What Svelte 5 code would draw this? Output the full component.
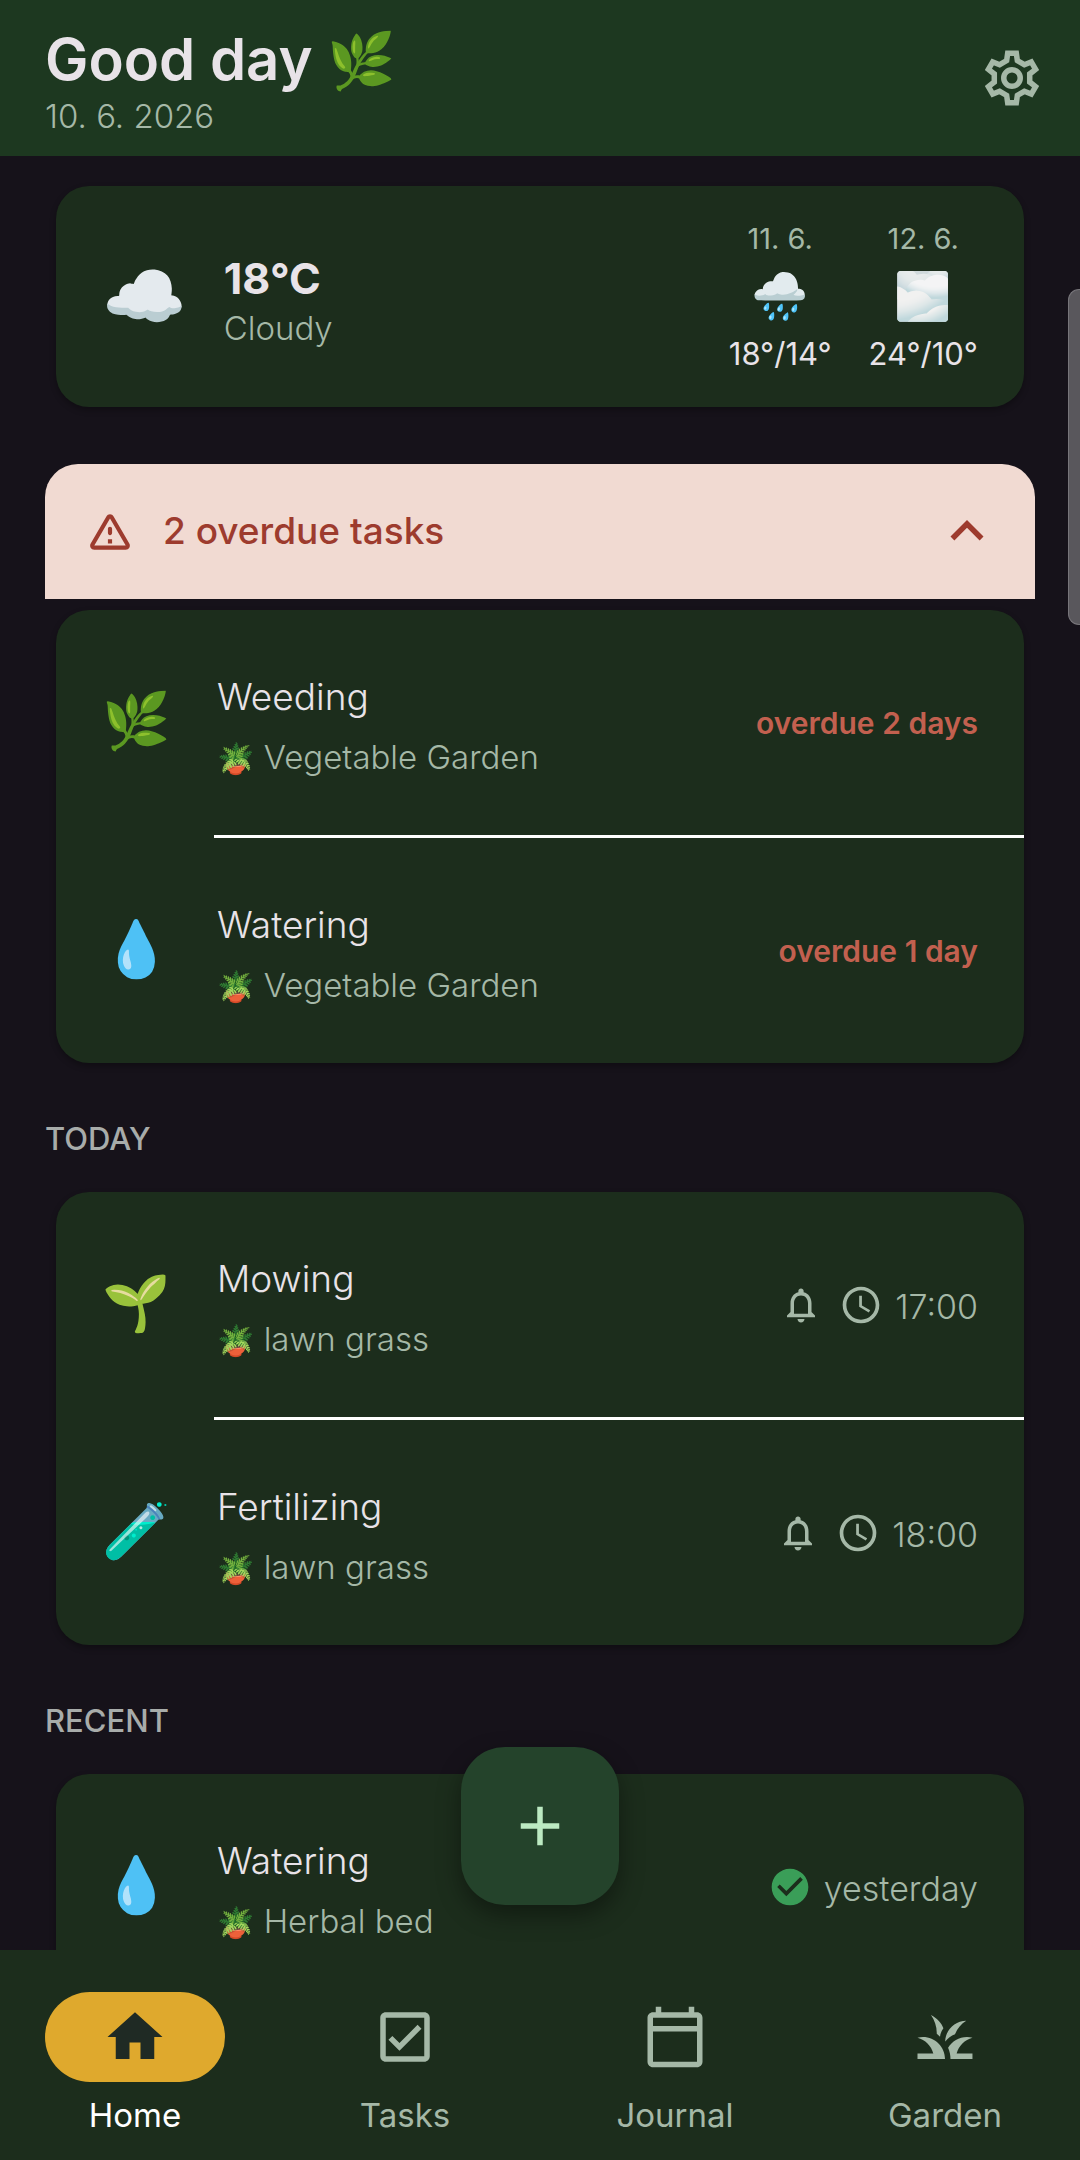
<script>
    const forecast = [
        { date: '11. 6.', icon: '🌧️', temps: '18°/14°' },
        { date: '12. 6.', icon: '🌫️', temps: '24°/10°' }
    ];

    const overdue = [
        { icon: '🌿', name: 'Weeding', place: 'Vegetable Garden', late: 'overdue 2 days' },
        { icon: '💧', name: 'Watering', place: 'Vegetable Garden', late: 'overdue 1 day' }
    ];

    const today = [
        { icon: '🌱', name: 'Mowing', place: 'lawn grass', time: '17:00' },
        { icon: '🧪', name: 'Fertilizing', place: 'lawn grass', time: '18:00' }
    ];

    const recent = [
        { icon: '💧', name: 'Watering', place: 'Herbal bed', done: 'yesterday' }
    ];

    const tabs = [
        {
            id: 'home',
            label: 'Home',
            path: 'M10 20v-6h4v6h5v-8h3L12 3 2 12h3v8z'
        },
        {
            id: 'tasks',
            label: 'Tasks',
            path: 'M19 3H5c-1.1 0-2 .9-2 2v14c0 1.1.9 2 2 2h14c1.1 0 2-.9 2-2V5c0-1.1-.9-2-2-2zm0 16H5V5h14v14zM17.99 9l-1.41-1.42-6.59 6.59-2.58-2.57-1.42 1.41 4 3.99z'
        },
        {
            id: 'journal',
            label: 'Journal',
            path: 'M20 3h-1V1h-2v2H7V1H5v2H4c-1.1 0-2 .9-2 2v16c0 1.1.9 2 2 2h16c1.1 0 2-.9 2-2V5c0-1.1-.9-2-2-2zm0 18H4V10h16v11zm0-13H4V5h16v3z'
        },
        {
            id: 'garden',
            label: 'Garden',
            path: 'M12 20H2v-2h5.75C7.02 15.19 4.81 12.99 2 12.26 2.64 12.1 3.31 12 4 12c4.42 0 8 3.58 8 8zm10-7.74c-.64-.16-1.31-.26-2-.26-2.93 0-5.48 1.58-6.88 3.93.29.66.53 1.35.67 2.07.13.65.2 1.32.2 2h8v-2h-5.75c.74-2.81 2.95-5.01 5.76-5.74zm-6.36-1.24c.78-2.09 2.23-3.84 4.09-4.97-4.11.04-7.46 3.33-7.66 7.41.01.07.02.14.03.21.89-1.21 2.11-2.12 3.54-2.65zm-4.22-2.16C10.84 6.99 9.09 5.11 6.89 4c1.37 1.92 2.17 4.27 2.11 6.81.43.35.82.72 1.19 1.11.09-1.07.52-2.09 1.23-3.06z'
        }
    ];

    let active = 'home';
    let open = true;
</script>

{#snippet taskCard(tasks)}
    <ul class="card tasks">
        {#each tasks as task}
            <li>
                <span class="emoji icon">{task.icon}</span>
                <div class="text">
                    <span class="name">{task.name}</span>
                    <span class="place"><span class="emoji">🪴</span> {task.place}</span>
                </div>
                {#if task.late}
                    <span class="late">{task.late}</span>
                {:else if task.time}
                    <svg class="bell" viewBox="0 0 24 24"><path d="M12 22c1.1 0 2-.9 2-2h-4c0 1.1.89 2 2 2zm6-6v-5c0-3.07-1.63-5.64-4.5-6.32V4c0-.83-.67-1.5-1.5-1.5s-1.5.67-1.5 1.5v.68C7.64 5.36 6 7.92 6 11v5l-2 2v1h16v-1l-2-2zm-2 1H8v-6c0-2.48 1.51-4.5 4-4.5s4 2.02 4 4.5v6z" /></svg>
                    <svg class="state" viewBox="0 0 24 24"><path d="M11.99 2C6.47 2 2 6.48 2 12s4.47 10 9.99 10C17.52 22 22 17.52 22 12S17.52 2 11.99 2zM12 20c-4.42 0-8-3.58-8-8s3.58-8 8-8 8 3.58 8 8-3.58 8-8 8zm.5-13H11v6l5.25 3.15.75-1.23-4.5-2.67z" /></svg>
                    <span class="when">{task.time}</span>
                {:else}
                    <svg class="state done" viewBox="0 0 24 24"><path d="M12 2C6.48 2 2 6.48 2 12s4.48 10 10 10 10-4.48 10-10S17.52 2 12 2zm-2 15l-5-5 1.41-1.41L10 14.17l7.59-7.59L19 8l-9 9z" /></svg>
                    <span class="when">{task.done}</span>
                {/if}
            </li>
        {/each}
    </ul>
{/snippet}

<div class="page">
    <header class="top">
        <div class="greeting">
            <h1>Good day <span class="emoji">🌿</span></h1>
            <p>10. 6. 2026</p>
        </div>
        <button type="button" class="settings" aria-label="Settings">
            <svg viewBox="-12 -12 24 24">
                <path d="M-1.95-6.31L-1.57-9H1.57L1.95-6.31 4.49-4.84 7.01-5.86 8.58-3.14 6.44-1.47V1.47L8.58 3.14 7.01 5.86 4.49 4.84 1.95 6.31 1.57 9H-1.57L-1.95 6.31-4.49 4.84-7.01 5.86-8.58 3.14-6.44 1.47V-1.47L-8.58-3.14-7.01-5.86-4.49-4.84z" />
                <circle r="3" />
            </svg>
        </button>
    </header>

    <div class="body">
        <main class="scroll">
            <section class="card weather">
                <span class="emoji sky">☁️</span>
                <div class="now">
                    <strong>18°C</strong>
                    <span>Cloudy</span>
                </div>
                {#each forecast as day}
                    <div class="day">
                        <span class="date">{day.date}</span>
                        <span class="emoji">{day.icon}</span>
                        <span>{day.temps}</span>
                    </div>
                {/each}
            </section>

            <button type="button" class="banner" aria-expanded={open} on:click={() => (open = !open)}>
                <svg class="warning" viewBox="0 0 24 24"><path d="M12 5.99L19.53 19H4.47L12 5.99M2.74 18c-.77 1.33.19 3 1.73 3h15.06c1.54 0 2.5-1.67 1.73-3L13.73 4.99c-.77-1.33-2.69-1.33-3.46 0L2.74 18zM11 11v2c0 .55.45 1 1 1s1-.45 1-1v-2c0-.55-.45-1-1-1s-1 .45-1 1zm0 5h2v2h-2z" /></svg>
                <span>{overdue.length} overdue tasks</span>
                <svg class="chevron" class:closed={!open} viewBox="0 0 24 24"><path d="M12 8l-6 6 1.41 1.41L12 10.83l4.59 4.58L18 14z" /></svg>
            </button>
            {#if open}
                {@render taskCard(overdue)}
            {/if}

            <h2>TODAY</h2>
            {@render taskCard(today)}

            <h2>RECENT</h2>
            {@render taskCard(recent)}
        </main>
        <div class="thumb"></div>
        <button type="button" class="add" aria-label="Add task">
            <svg viewBox="0 0 24 24"><path d="M19 13h-6v6h-2v-6H5v-2h6V5h2v6h6z" /></svg>
        </button>
    </div>

    <nav class="tabs">
        {#each tabs as tab}
            <a href="#{tab.id}" class:active={active === tab.id} on:click={() => (active = tab.id)}>
                <span class="pill">
                    <svg viewBox="0 0 24 24"><path d={tab.path} /></svg>
                </span>
                {tab.label}
            </a>
        {/each}
    </nav>
</div>

<style>
    :global(body) {
        --bg: #16121a;
        --card: #1c2d1c;
        --top: #1d3820;
        --text: #e8e3e8;
        --muted: #a5b8a7;
        --red: #9d3b2e;
        background: var(--bg);
    }

    .page {
        height: 100vh;
        display: flex;
        flex-direction: column;
        overflow: hidden;
        color: var(--text);
        font-family: Inter, sans-serif;
        font-size: 33px;
        line-height: 44px;
    }

    h1, h2, p, ul {
        margin: 0;
        padding: 0;
    }

    button {
        border: none;
        padding: 0;
        font: inherit;
        cursor: pointer;
    }

    svg {
        display: block;
        flex: none;
        width: 66px;
        height: 66px;
        fill: currentColor;
    }

    .emoji {
        font-family: 'Noto Color Emoji', sans-serif;
        font-weight: normal;
    }

    .top {
        display: flex;
        align-items: center;
        justify-content: space-between;
        padding: 0 35px 0 45px;
        background: var(--top);
    }

    .greeting {
        padding: 26px 0 18px;
    }

    .greeting h1 {
        font-size: 58px;
        font-weight: 600;
        line-height: 67px;
    }

    .greeting .emoji {
        font-size: 55px;
        line-height: 66px;
    }

    .greeting p {
        color: var(--muted);
        font-weight: 300;
    }

    .settings {
        background: none;
        color: var(--muted);
    }

    .settings svg {
        fill: none;
        stroke: currentColor;
        stroke-width: 2;
    }

    .body {
        flex: 1;
        min-height: 0;
        position: relative;
    }

    .scroll {
        height: 100%;
        box-sizing: border-box;
        padding: 30px 45px 0;
        overflow-y: auto;
        scrollbar-width: none;
    }

    .thumb {
        position: absolute;
        top: 133px;
        right: 0;
        width: 12px;
        height: 336px;
        box-sizing: border-box;
        border: 1px solid #77757a;
        border-right: none;
        border-radius: 11px 0 0 11px;
        background: #59575c;
    }

    .card {
        margin: 0 11px;
        border-radius: 33px;
        background: var(--card);
        box-shadow: 0 3px 6px rgba(0, 0, 0, 0.3);
    }

    .weather {
        display: flex;
        align-items: center;
        gap: 37px;
        padding: 33px 46px;
        margin-bottom: 57px;
    }

    .sky {
        font-size: 68px;
        line-height: 66px;
    }

    .now {
        flex: 1;
        display: flex;
        flex-direction: column;
        padding-top: 9px;
        line-height: 46px;
        color: var(--muted);
        font-weight: 300;
    }

    .now strong {
        color: var(--text);
        font-size: 43px;
        font-weight: 700;
        line-height: 54px;
    }

    .day {
        display: flex;
        flex-direction: column;
        align-items: center;
        font-size: 31px;
        line-height: 40px;
    }

    .day .date {
        color: var(--muted);
        font-size: 29px;
    }

    .day .emoji {
        font-size: 46px;
        line-height: 75px;
    }

    .banner {
        display: flex;
        align-items: center;
        width: 100%;
        padding: 34px 35px 35px 40px;
        margin-bottom: 11px;
        border-radius: 33px 33px 0 0;
        background: #f1dad2;
        color: var(--red);
        font-size: 37px;
        font-weight: 500;
        text-align: left;
    }

    .banner span {
        flex: 1;
        padding-left: 28px;
    }

    .warning {
        width: 50px;
        height: 50px;
    }

    .closed {
        transform: rotate(180deg);
    }

    h2 {
        margin: 54px 0 31px;
        color: #a8acaa;
        font-size: 31px;
        font-weight: 500;
        line-height: 44px;
    }

    .tasks {
        list-style: none;
    }

    .tasks li {
        display: flex;
        align-items: center;
        padding: 0 46px;
        position: relative;
    }

    .tasks li + li {
        margin-top: 3px;
    }

    .tasks li + li::before {
        content: '';
        position: absolute;
        top: -3px;
        left: 158px;
        right: 0;
        height: 3px;
        background: #fff;
    }

    .icon {
        width: 68px;
        padding-bottom: 4px;
        font-size: 55px;
        line-height: 66px;
    }

    .text {
        flex: 1;
        display: flex;
        flex-direction: column;
        padding: 57px 0 48px 47px;
        font-weight: 300;
        line-height: 60px;
    }

    .name {
        font-size: 37px;
    }

    .place {
        color: var(--muted);
    }

    .place .emoji {
        font-size: 30px;
        line-height: 44px;
    }

    .late {
        color: #c2604f;
        font-size: 30px;
        font-weight: 600;
    }

    .bell {
        width: 42px;
        height: 42px;
        margin-right: 17px;
        color: var(--muted);
    }

    .state {
        width: 44px;
        height: 44px;
        color: var(--muted);
    }

    .state.done {
        color: #3a9e58;
    }

    .when {
        padding: 4px 0 0 12px;
        color: var(--muted);
        font-size: 34px;
        font-weight: 300;
    }

    .add {
        position: absolute;
        bottom: 45px;
        left: 50%;
        display: grid;
        place-items: center;
        width: 158px;
        height: 158px;
        margin-left: -79px;
        border-radius: 44px;
        background: #24432b;
        color: #bceac2;
        box-shadow: 0 10px 24px rgba(0, 0, 0, 0.4);
    }

    .tabs {
        display: grid;
        grid-template-columns: repeat(4, 1fr);
        padding: 42px 0 23px;
        background: var(--card);
    }

    .tabs a {
        display: flex;
        flex-direction: column;
        align-items: center;
        gap: 11px;
        color: var(--muted);
        text-decoration: none;
    }

    .tabs .active {
        color: #fff;
    }

    .pill {
        display: grid;
        place-items: center;
        width: 180px;
        height: 90px;
        border-radius: 45px;
    }

    .active .pill {
        background: #dfa92d;
        color: #1f2a24;
    }
</style>
